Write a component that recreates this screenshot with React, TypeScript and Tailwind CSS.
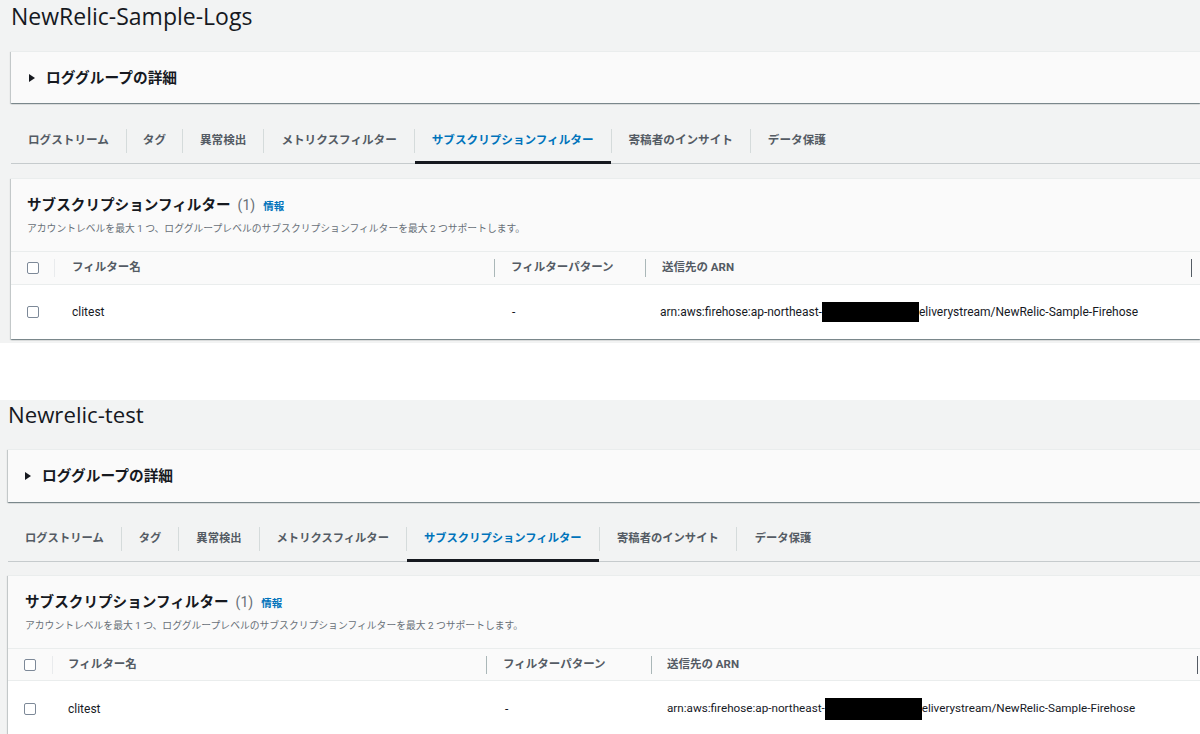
import React from "react";

type Variant = {
  title: string;
  pad: string;
  titleBox: string;
  detailsPad: string;
  detailsH: string;
  tabsWrap: string;
  tabFont: string;
  tabPads: string[];
  cardGap: string;
  cardHeader: string;
  cols: string;
  headH: string;
  rowH: string;
  nameHeadPad: string;
  patHeadPad: string;
  arnHeadPad: string;
  nameCellPad: string;
  patCellPad: string;
  arnCellPad: string;
  cbPad: string;
  arnFont: string;
  boxW: string;
  boxH: string;
};

const TABS = [
  "ログストリーム",
  "タグ",
  "異常検出",
  "メトリクスフィルター",
  "サブスクリプションフィルター",
  "寄稿者のインサイト",
  "データ保護",
];

const V1: Variant = {
  title: "NewRelic-Sample-Logs",
  pad: "pl-[11px]",
  titleBox: "h-[51px] leading-[32px] text-[23px]",
  detailsPad: "pl-[18px]",
  detailsH: "h-[52px]",
  tabsWrap: "pt-[16px]",
  tabFont: "text-[11.6px]",
  tabPads: ["pl-[17px] pr-[17px]", "px-[16px]", "px-[17px]", "px-[17px]", "px-[17px]", "px-[17px]", "px-[17px]"],
  cardGap: "mt-[14px]",
  cardHeader: "h-[72px] pl-[16px] pt-[16px]",
  cols: "grid-cols-[43px_440px_151px_546px_1fr]",
  headH: "h-[33px]",
  rowH: "h-[55px]",
  nameHeadPad: "ml-[17px]",
  patHeadPad: "ml-[16px]",
  arnHeadPad: "ml-[16px]",
  nameCellPad: "pl-[18px]",
  patCellPad: "pl-[18px]",
  arnCellPad: "pl-[15px]",
  cbPad: "pl-[16px]",
  arnFont: "text-[12px]",
  boxW: "w-[97px]",
  boxH: "h-[20px]",
};

const V2: Variant = {
  title: "Newrelic-test",
  pad: "pl-[8px]",
  titleBox: "h-[49px] leading-[30px] text-[22.2px]",
  detailsPad: "pl-[17px]",
  detailsH: "h-[53px]",
  tabsWrap: "pt-[15px]",
  tabFont: "text-[11.3px]",
  tabPads: ["pl-[17px] pr-[17px]", "px-[17px]", "px-[17px]", "px-[17px]", "px-[17px]", "px-[17.5px]", "px-[17.5px]"],
  cardGap: "mt-[13px]",
  cardHeader: "h-[72px] pl-[17px] pt-[16px]",
  cols: "grid-cols-[44px_434px_165px_546px_1fr]",
  headH: "h-[32px]",
  rowH: "h-[56px]",
  nameHeadPad: "ml-[15px]",
  patHeadPad: "ml-[16px]",
  arnHeadPad: "ml-[15px]",
  nameCellPad: "pl-[16px]",
  patCellPad: "pl-[19px]",
  arnCellPad: "pl-[16px]",
  cbPad: "pl-[16px]",
  arnFont: "text-[11.7px]",
  boxW: "w-[97px]",
  boxH: "h-[22px]",
};

function Checkbox() {
  return <span className="block w-[12px] h-[12px] rounded-[2px] border border-[#7d8998] bg-white" />;
}

const CARD_SHADOW =
  "shadow-[0_1px_1px_0_rgba(0,28,36,0.3),1px_1px_1px_0_rgba(0,28,36,0.15),-1px_1px_1px_0_rgba(0,28,36,0.15)]";

function Section({ v }: { v: Variant }) {
  return (
    <div className={`${v.pad} text-[#16191f]`}>
      <div className={`${v.titleBox} font-['Open_Sans'] text-[#16191f]`}>{v.title}</div>

      <div className={`${v.detailsH} flex items-center ${v.detailsPad} bg-[#fafafa] border-t border-[#eaeded] ${CARD_SHADOW}`}>
        <svg width="6" height="8" viewBox="0 0 6 8" className="shrink-0">
          <path d="M0 0 L6 4 L0 8 Z" fill="#16191f" />
        </svg>
        <span className="ml-[11px] text-[14.7px] font-bold leading-[20px]">ロググループの詳細</span>
      </div>

      <div className={`${v.tabsWrap} border-b border-[#c6cbcd]`}>
        <div className="flex items-center h-[44px]">
          {TABS.map((t, i) => (
            <React.Fragment key={t}>
              {i > 0 && <span className="w-px h-[24px] bg-[#d5dbdb] shrink-0" />}
              <div
                className={`relative h-[44px] flex items-center ${v.tabPads[i]} ${v.tabFont} font-bold whitespace-nowrap ${
                  i === 4 ? "text-[#0073bb]" : "text-[#545b64]"
                }`}
              >
                {t}
                {i === 4 && <span className="absolute left-0 right-0 bottom-[-1px] h-[3px] bg-[#16191f]" />}
              </div>
            </React.Fragment>
          ))}
        </div>
      </div>

      <div className={`${v.cardGap} bg-[#fafafa] border-t border-[#eaeded] ${CARD_SHADOW}`}>
        <div className={v.cardHeader}>
          <div className="flex items-baseline leading-[20px]">
            <span className="text-[14.6px] font-bold">サブスクリプションフィルター</span>
            <span className="ml-[7px] text-[14px] text-[#687078]">(1)</span>
            <span className="ml-[8px] text-[10.5px] font-bold text-[#0073bb]">情報</span>
          </div>
          <div className="mt-[5px] text-[9.8px] leading-[14px] text-[#687078] whitespace-nowrap">
            アカウントレベルを最大 1 つ、ロググループレベルのサブスクリプションフィルターを最大 2 つサポートします。
          </div>
        </div>

        <div className={`grid ${v.cols} ${v.headH} items-center border-t border-[#eaeded] bg-[#fafafa] text-[11.5px] font-bold text-[#545b64]`}>
          <div className={`${v.cbPad} flex items-center`}>
            <Checkbox />
          </div>
          <div className="flex items-center">
            <span className="w-px h-[18px] bg-[#e9ebed]" />
            <span className={v.nameHeadPad}>フィルター名</span>
          </div>
          <div className="flex items-center">
            <span className="w-px h-[18px] bg-[#aab7b8]" />
            <span className={v.patHeadPad}>フィルターパターン</span>
          </div>
          <div className="flex items-center">
            <span className="w-px h-[18px] bg-[#aab7b8]" />
            <span className={v.arnHeadPad}>送信先の ARN</span>
          </div>
          <div className="flex items-center">
            <span className="w-px h-[18px] bg-[#545b64]" />
          </div>
        </div>

        <div className={`grid ${v.cols} ${v.rowH} items-center border-t border-[#eaeded] bg-white text-[12px] text-[#16191f]`}>
          <div className={`${v.cbPad} flex items-center`}>
            <Checkbox />
          </div>
          <div className={v.nameCellPad}>clitest</div>
          <div className={v.patCellPad}>-</div>
          <div className={`${v.arnCellPad} ${v.arnFont} flex items-center whitespace-nowrap col-span-2`}>
            <span>arn:aws:firehose:ap-northeast-</span>
            <span className={`${v.boxW} ${v.boxH} bg-black shrink-0`} />
            <span>eliverystream/NewRelic-Sample-Firehose</span>
          </div>
        </div>
      </div>
    </div>
  );
}

export default function App() {
  return (
    <div className="w-[1200px] h-[734px] overflow-hidden bg-white font-['Roboto','Noto_Sans_CJK_JP',sans-serif]">
      <div className="h-[343px] overflow-hidden bg-[#f2f3f3]">
        <Section v={V1} />
      </div>
      <div className="h-[57px] bg-white" />
      <div className="h-[334px] overflow-hidden bg-[#f2f3f3]">
        <Section v={V2} />
      </div>
    </div>
  );
}
